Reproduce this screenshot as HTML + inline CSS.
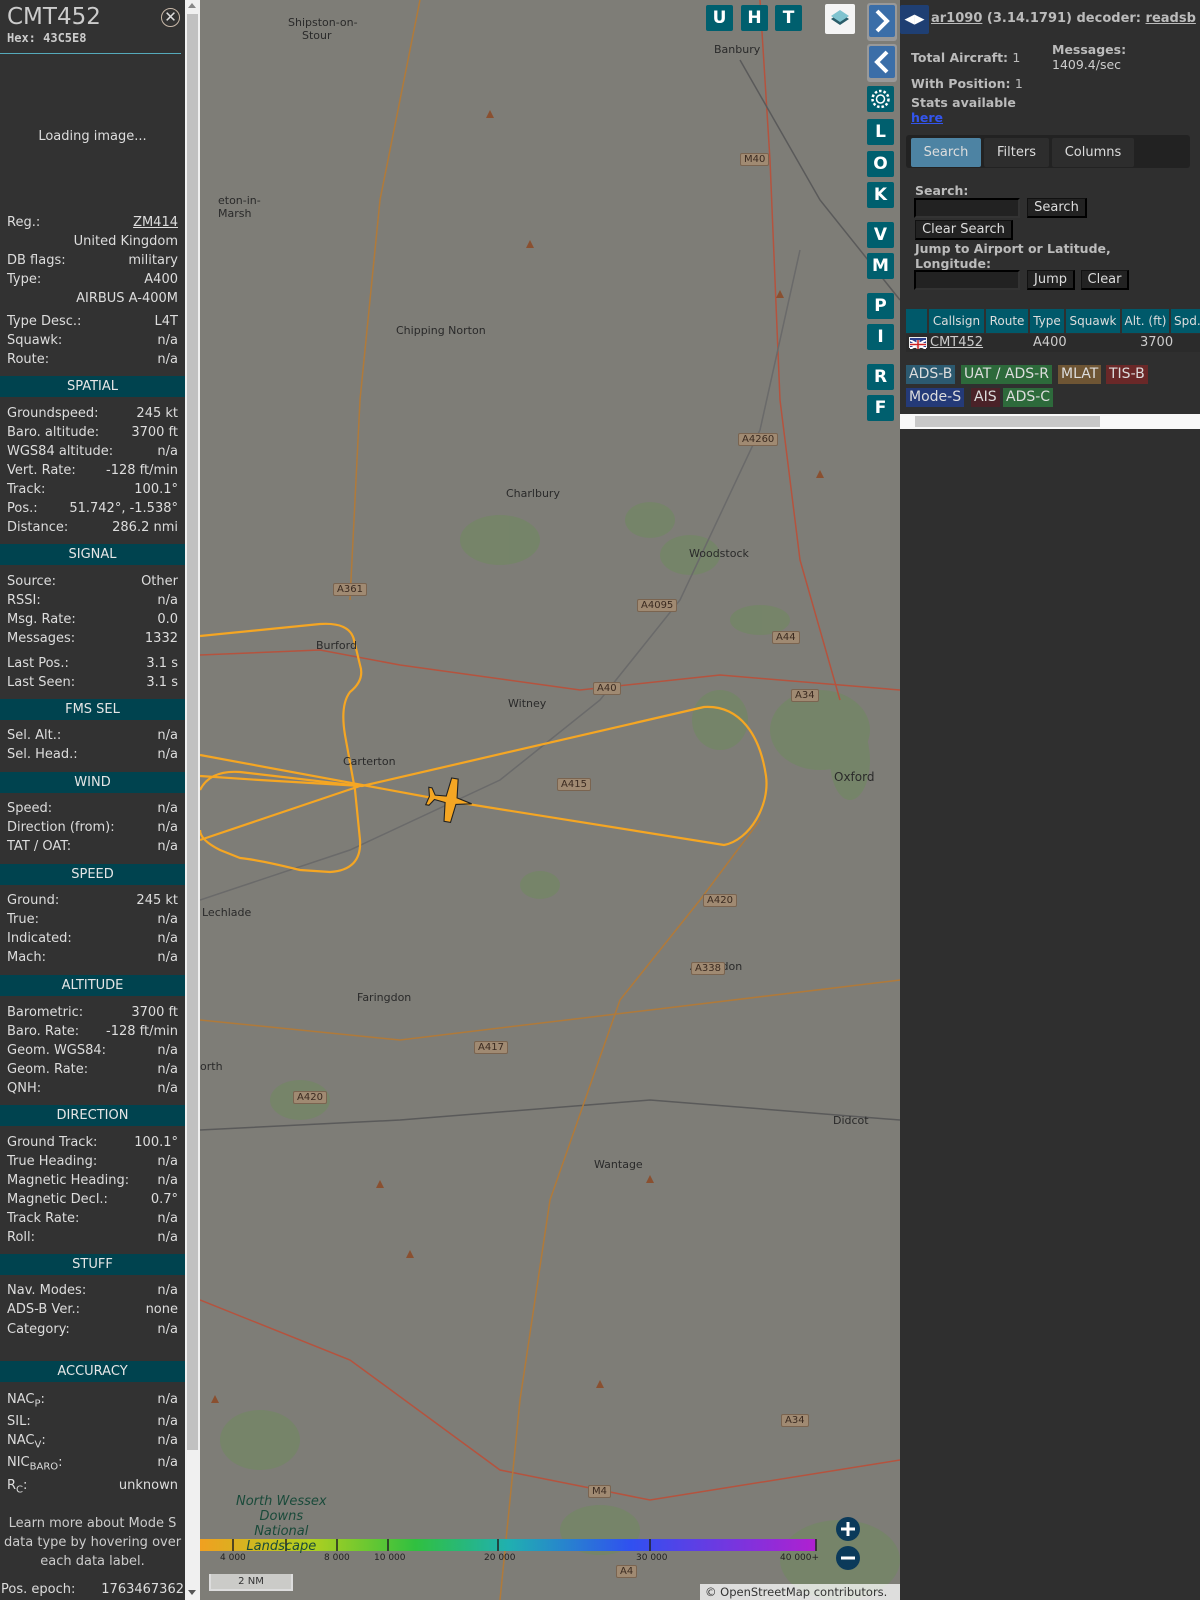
<!DOCTYPE html>
<html><head><meta charset="utf-8">
<style>
*{margin:0;padding:0;box-sizing:border-box}
body{width:1200px;height:1600px;overflow:hidden;background:#7e7d77;font-family:"DejaVu Sans","Liberation Sans",sans-serif;font-size:13px;color:#ddd;position:relative}
#left{position:absolute;left:0;top:0;width:185px;height:1600px;background:#323232}
#lsb{position:absolute;left:185px;top:0;width:15px;height:1600px;background:#f0f0f0}
#lsb .th{position:absolute;left:2px;top:14px;width:11px;height:1436px;background:#c1c1c1}
.r{position:absolute;left:7px;width:171px;height:19px;line-height:19px;font-size:13px;color:#ddd}
.r span{position:absolute;right:0;top:0}
.h{position:absolute;left:0;width:185px;height:21px;line-height:21px;background:#00434f;text-align:center;color:#e6e6e6;font-size:13px}
#map{position:absolute;left:200px;top:0;width:700px;height:1600px;overflow:hidden}
.mb{position:absolute;width:27px;height:26px;background:#005f6e;color:#fff;font-weight:bold;font-size:17px;text-align:center;line-height:26px;border-radius:2px}
#right{position:absolute;left:900px;top:0;width:300px;height:1600px;background:#2f2f2f;color:#ccc}
.b{font-weight:bold;color:#bbb}
.btn{position:absolute;height:20px;line-height:18px;background:#222;border:1px solid #111;border-right:2px solid #000;border-bottom:2px solid #000;color:#ddd;font-size:13px;text-align:center}
.inp{position:absolute;height:20px;background:#222;border:2px solid #000;border-right-color:#333;border-bottom-color:#333}
.th2{position:absolute;top:309px;height:24px;line-height:24px;background:#00596a;color:#ddd;font-size:12px;text-align:center}
.bd{position:absolute;height:19px;line-height:19px;font-size:14px;padding:0 3px;color:#ddd}
.tl{position:absolute;color:#2a2a2a;font-size:11px;white-space:nowrap}
.rd{position:absolute;font-size:10px;color:#3a2a20;background:#a08a72;border:1px solid #7a6450;padding:0 3px;border-radius:2px}
</style></head><body>

<div id="map">
<svg width="700" height="1600" style="position:absolute;left:0;top:0">
<g fill="#6f8a5e" opacity="0.55">
<ellipse cx="300" cy="540" rx="40" ry="25"/><ellipse cx="490" cy="555" rx="30" ry="20"/><ellipse cx="520" cy="720" rx="28" ry="30"/>
<ellipse cx="340" cy="885" rx="20" ry="14"/><ellipse cx="620" cy="730" rx="50" ry="40"/><ellipse cx="450" cy="520" rx="25" ry="18"/>
<ellipse cx="60" cy="1440" rx="40" ry="30"/><ellipse cx="640" cy="1560" rx="60" ry="40"/><ellipse cx="400" cy="1530" rx="40" ry="25"/>
<ellipse cx="650" cy="760" rx="20" ry="40"/><ellipse cx="100" cy="1100" rx="30" ry="20"/><ellipse cx="560" cy="620" rx="30" ry="15"/>
</g>
<g fill="none" stroke-width="1.5">
<path d="M560 0 L570 160 L580 400 L600 560 L640 700" stroke="#b5533e"/>
<path d="M0 655 L120 650 L200 665 L380 690 L520 675 L700 690" stroke="#b5533e"/>
<path d="M0 1130 L200 1120 L450 1100 L700 1120" stroke="#5a5a5a"/>
<path d="M0 1300 L150 1360 L300 1470 L450 1500 L700 1460" stroke="#b5533e"/>
<path d="M150 600 L160 400 L180 200 L220 0" stroke="#b07a3a"/>
<path d="M300 1600 L320 1400 L350 1200 L420 1000 L500 900 L560 820" stroke="#b07a3a"/>
<path d="M0 900 L150 850 L300 780 L400 700 L480 600 L560 430 L600 250" stroke="#6a6a6a"/>
<path d="M0 1020 L200 1040 L450 1010 L700 980" stroke="#b07a3a"/>
<path d="M540 60 L620 200 L700 300" stroke="#5a5a5a"/>
</g>
<g fill="none" stroke="#f5a623" stroke-width="2.2" stroke-linejoin="round">
<path d="M0 755 L249 801 L524 845 C550 840 570 805 566 776 C560 735 540 705 504 707 L162 786 L60 780 L0 776"/>
<path d="M0 636 L120 624 Q150 622 154 640 L160 665 Q165 680 150 692 Q140 705 145 735 L155 790 L160 840 Q162 870 130 872 L100 870 Q60 860 40 858 L20 850 Q0 840 0 830"/>
<path d="M0 790 Q10 770 40 772 L160 786 L0 840"/>
</g>
<g transform="translate(250,800) rotate(10) scale(1.1)">
<path d="M0 -20 L3 -6 L20 -4 L20 2 L3 4 L2 14 L8 18 L8 21 L0 19 L-8 21 L-8 18 L-2 14 L-3 4 L-20 2 L-20 -4 L-3 -6 Z" transform="rotate(90)" fill="#f5a623" stroke="#222" stroke-width="1"/>
</g>
<g fill="#8a5030">
<path d="M290 110 l4 8 h-8z"/><path d="M330 240 l4 8 h-8z"/><path d="M450 1175 l4 8 h-8z"/><path d="M210 1250 l4 8 h-8z"/><path d="M400 1380 l4 8 h-8z"/><path d="M15 1395 l4 8 h-8z"/><path d="M580 290 l4 8 h-8z"/><path d="M620 470 l4 8 h-8z"/><path d="M180 1180 l4 8 h-8z"/>
</g>
<defs><linearGradient id="g" x1="0" x2="1"><stop offset="0" stop-color="#f0a020"/><stop offset="0.18" stop-color="#b0d020"/><stop offset="0.35" stop-color="#30c040"/><stop offset="0.5" stop-color="#20b0b0"/><stop offset="0.7" stop-color="#3050f0"/><stop offset="1" stop-color="#b020d0"/></linearGradient></defs>
<rect x="0" y="1539" width="616" height="12" fill="url(#g)"/>
<g stroke="#222" stroke-width="1.5"><path d="M33 1539v12M86 1539v12M137 1539v12M188 1539v12M298 1539v12M450 1539v12M616 1539v12"/></g>
<circle cx="648" cy="1529" r="12" fill="#0b3a5a"/><path d="M641 1529h14M648 1522v14" stroke="#fff" stroke-width="3"/>
<circle cx="648" cy="1558" r="12" fill="#0b3a5a"/><path d="M641 1558h14" stroke="#fff" stroke-width="3"/>
</svg>
<div class="tl" style="left:88px;top:16px">Shipston-on-<br>&nbsp;&nbsp;&nbsp;&nbsp;Stour</div>
<div class="tl" style="left:514px;top:43px">Banbury</div>
<div class="tl" style="left:18px;top:194px">eton-in-<br>Marsh</div>
<div class="tl" style="left:196px;top:324px">Chipping Norton</div>
<div class="tl" style="left:306px;top:487px">Charlbury</div>
<div class="tl" style="left:489px;top:547px">Woodstock</div>
<div class="tl" style="left:116px;top:639px">Burford</div>
<div class="tl" style="left:308px;top:697px">Witney</div>
<div class="tl" style="left:143px;top:755px">Carterton</div>
<div class="tl" style="left:634px;top:770px;font-size:12px">Oxford</div>
<div class="tl" style="left:2px;top:906px">Lechlade</div>
<div class="tl" style="left:490px;top:960px">Abingdon</div>
<div class="tl" style="left:157px;top:991px">Faringdon</div>
<div class="tl" style="left:394px;top:1158px">Wantage</div>
<div class="tl" style="left:633px;top:1114px">Didcot</div>
<div class="tl" style="left:0;top:1060px">orth</div>
<div class="tl" style="left:36px;top:1494px;color:#1a4a3a;font-style:italic;font-size:13px;text-align:center">North Wessex<br>Downs<br>National<br>Landscape</div>
<div class="rd" style="left:540px;top:153px">M40</div>
<div class="rd" style="left:538px;top:433px">A4260</div>
<div class="rd" style="left:133px;top:583px">A361</div>
<div class="rd" style="left:437px;top:599px">A4095</div>
<div class="rd" style="left:572px;top:631px">A44</div>
<div class="rd" style="left:393px;top:682px">A40</div>
<div class="rd" style="left:591px;top:689px">A34</div>
<div class="rd" style="left:357px;top:778px">A415</div>
<div class="rd" style="left:503px;top:894px">A420</div>
<div class="rd" style="left:491px;top:962px">A338</div>
<div class="rd" style="left:274px;top:1041px">A417</div>
<div class="rd" style="left:93px;top:1091px">A420</div>
<div class="rd" style="left:581px;top:1414px">A34</div>
<div class="rd" style="left:388px;top:1485px">M4</div>
<div class="rd" style="left:416px;top:1565px">A4</div>
<div style="position:absolute;top:1553px;left:0;width:660px;font-size:9px;color:#222">
<span style="position:absolute;left:20px">4 000</span><span style="position:absolute;left:124px">8 000</span><span style="position:absolute;left:174px">10 000</span><span style="position:absolute;left:284px">20 000</span><span style="position:absolute;left:436px">30 000</span><span style="position:absolute;left:580px">40 000+</span></div>
<div style="position:absolute;left:9px;top:1574px;width:84px;height:17px;border:2px solid #ddd;border-top:none;background:rgba(255,255,255,0.6);color:#333;font-size:10px;text-align:center;line-height:15px">2 NM</div>
<div style="position:absolute;left:500px;top:1584px;width:200px;height:16px;background:rgba(255,255,255,0.75);color:#333;font-size:11.5px;line-height:16px;padding-left:5px">© OpenStreetMap contributors.</div>

<div class="mb" style="left:506px;top:5px">U</div>
<div class="mb" style="left:541px;top:5px">H</div>
<div class="mb" style="left:575px;top:5px">T</div>
<div style="position:absolute;left:625px;top:4px;width:30px;height:30px;background:#f4f4f4;border-radius:2px">
<svg width="30" height="30"><path d="M15 9 L24 15 L15 21 L6 15Z" fill="#2a5d6a"/><path d="M15 6 L24 12 L15 18 L6 12Z" fill="#7fc3cf"/></svg></div>
<div style="position:absolute;left:667px;top:3px;width:30px;height:38px;background:#999;border-radius:3px;padding:2px"><div style="background:#3b6ea8;width:26px;height:32px;border-radius:2px"><svg width="26" height="32"><path d="M8 6 L18 16 L8 26" stroke="#fff" stroke-width="4" fill="none"/></svg></div></div>
<div style="position:absolute;left:667px;top:44px;width:30px;height:38px;background:#999;border-radius:3px;padding:2px"><div style="background:#3b6ea8;width:26px;height:32px;border-radius:2px"><svg width="26" height="32"><path d="M18 6 L8 16 L18 26" stroke="#fff" stroke-width="4" fill="none"/></svg></div></div>
<div class="mb" style="left:667px;top:86px"><svg width="27" height="26"><circle cx="13.5" cy="13" r="4" fill="none" stroke="#fff" stroke-width="1.5"/><circle cx="13.5" cy="13" r="8" fill="none" stroke="#fff" stroke-width="2.5" stroke-dasharray="2.5 2"/></svg></div>
<div class="mb" style="left:667px;top:119px">L</div>
<div class="mb" style="left:667px;top:151px">O</div>
<div class="mb" style="left:667px;top:182px">K</div>
<div class="mb" style="left:667px;top:222px">V</div>
<div class="mb" style="left:667px;top:253px">M</div>
<div class="mb" style="left:667px;top:293px">P</div>
<div class="mb" style="left:667px;top:324px">I</div>
<div class="mb" style="left:667px;top:364px">R</div>
<div class="mb" style="left:667px;top:395px">F</div>
</div>

<div id="right">
<div style="position:absolute;left:0;top:5px;width:29px;height:29px;background:#1f3f73;border-radius:2px;color:#fff;font-size:13px;line-height:29px;text-align:center">◀▶</div>
<div class="b" style="position:absolute;left:31px;top:11px;font-size:13px;white-space:nowrap"><u>ar1090</u> (3.14.1791) decoder: <u>readsb</u></div>
<div class="b" style="position:absolute;left:11px;top:50px;font-size:12.5px">Total Aircraft: <span style="font-weight:normal">1</span></div>
<div class="b" style="position:absolute;left:152px;top:42px;font-size:12.5px">Messages:<br><span style="font-weight:normal;color:#ccc">1409.4/sec</span></div>
<div class="b" style="position:absolute;left:11px;top:76px;font-size:12.5px">With Position: <span style="font-weight:normal">1</span></div>
<div class="b" style="position:absolute;left:11px;top:95px;font-size:12.5px">Stats available<br><u style="color:#3355ee">here</u></div>
<div style="position:absolute;left:6px;top:135px;width:284px;height:33px;background:#222;border-radius:3px"></div>
<div style="position:absolute;left:11px;top:138px;width:70px;height:29px;background:#4d83a3;border-radius:2px;color:#ddd;line-height:29px;text-align:center">Search</div>
<div style="position:absolute;left:84px;top:138px;width:65px;height:29px;background:#2d2d2d;border-radius:2px;color:#ddd;line-height:29px;text-align:center">Filters</div>
<div style="position:absolute;left:152px;top:138px;width:82px;height:29px;background:#2d2d2d;border-radius:2px;color:#ddd;line-height:29px;text-align:center">Columns</div>
<div class="b" style="position:absolute;left:15px;top:183px;font-size:12.5px">Search:</div>
<div class="inp" style="left:14px;top:198px;width:106px"></div>
<div class="btn" style="left:127px;top:198px;width:60px">Search</div>
<div class="btn" style="left:15px;top:220px;width:98px">Clear Search</div>
<div class="b" style="position:absolute;left:15px;top:241px;font-size:12.5px;line-height:15px">Jump to Airport or Latitude,<br>Longitude:</div>
<div class="inp" style="left:14px;top:270px;width:106px"></div>
<div class="btn" style="left:127px;top:270px;width:48px">Jump</div>
<div class="btn" style="left:181px;top:270px;width:48px">Clear</div>
<div class="th2" style="left:6px;width:21px"></div>
<div class="th2" style="left:29px;width:55px">Callsign</div>
<div class="th2" style="left:86px;width:42px">Route</div>
<div class="th2" style="left:130px;width:34px">Type</div>
<div class="th2" style="left:166px;width:54px">Squawk</div>
<div class="th2" style="left:222px;width:47px">Alt. (ft)</div>
<div class="th2" style="left:271px;width:29px;text-align:left;padding-left:3px">Spd.</div>
<div style="position:absolute;left:6px;top:334px;width:294px;height:18px;background:#2b2b2b"></div>
<div style="position:absolute;left:9px;top:337px;width:18px;height:11px;background:#2a3e8a;border:1px solid #eee"><svg width="16" height="9"><path d="M0 0L16 9M16 0L0 9" stroke="#fff" stroke-width="2"/><path d="M8 0V9M0 4.5H16" stroke="#fff" stroke-width="3"/><path d="M8 0V9M0 4.5H16" stroke="#c22" stroke-width="1.5"/></svg></div>
<div style="position:absolute;left:30px;top:335px;color:#ccc;text-decoration:underline">CMT452</div>
<div style="position:absolute;left:133px;top:335px;color:#ccc">A400</div>
<div style="position:absolute;left:240px;top:335px;color:#ccc">3700</div>
<div class="bd" style="left:6px;top:365px;background:#2c5a70">ADS-B</div>
<div class="bd" style="left:61px;top:365px;background:#2d6a3b">UAT / ADS-R</div>
<div class="bd" style="left:158px;top:365px;background:#6e5534">MLAT</div>
<div class="bd" style="left:206px;top:365px;background:#6a2828">TIS-B</div>
<div class="bd" style="left:6px;top:388px;background:#243a78">Mode-S</div>
<div class="bd" style="left:71px;top:388px;background:#4a2228">AIS</div>
<div class="bd" style="left:103px;top:388px;background:#2d6a3b">ADS-C</div>
<div style="position:absolute;left:0;top:414px;width:300px;height:15px;background:#f8f8f8"><div style="position:absolute;left:15px;top:2px;width:185px;height:11px;background:#c8c8c8"></div></div>
</div>

<div id="left">
<div style="position:absolute;left:7px;top:4px;font-size:23px;color:#ccc">CMT452</div>
<div style="position:absolute;left:7px;top:31px;font-size:12px;font-weight:bold;color:#ccc;font-family:'DejaVu Sans Mono',monospace">Hex: 43C5E8</div>
<div style="position:absolute;left:161px;top:8px;width:19px;height:19px;border:1.5px solid #c8b8a8;border-radius:50%;color:#ddd;text-align:center;line-height:16px;font-size:15px">✕</div>
<div style="position:absolute;left:0;top:53px;width:181px;height:1px;background:#5ab"></div>
<div style="position:absolute;left:0;top:129px;width:185px;text-align:center;color:#ddd">Loading image...</div>

<div class="r" style="top:213px">Reg.:<span style="text-decoration:underline">ZM414</span></div>
<div class="r" style="top:232px"><span>United Kingdom</span></div>
<div class="r" style="top:251px">DB flags:<span>military</span></div>
<div class="r" style="top:270px">Type:<span>A400</span></div>
<div class="r" style="top:289px"><span>AIRBUS A-400M</span></div>
<div class="r" style="top:312px">Type Desc.:<span>L4T</span></div>
<div class="r" style="top:331px">Squawk:<span>n/a</span></div>
<div class="r" style="top:350px">Route:<span>n/a</span></div>
<div class="h" style="top:376px">SPATIAL</div>
<div class="r" style="top:404px">Groundspeed:<span>245 kt</span></div>
<div class="r" style="top:423px">Baro. altitude:<span>3700 ft</span></div>
<div class="r" style="top:442px">WGS84 altitude:<span>n/a</span></div>
<div class="r" style="top:461px">Vert. Rate:<span>-128 ft/min</span></div>
<div class="r" style="top:480px">Track:<span>100.1°</span></div>
<div class="r" style="top:499px">Pos.:<span>51.742°, -1.538°</span></div>
<div class="r" style="top:518px">Distance:<span>286.2 nmi</span></div>
<div class="h" style="top:544px">SIGNAL</div>
<div class="r" style="top:572px">Source:<span>Other</span></div>
<div class="r" style="top:591px">RSSI:<span>n/a</span></div>
<div class="r" style="top:610px">Msg. Rate:<span>0.0</span></div>
<div class="r" style="top:629px">Messages:<span>1332</span></div>
<div class="r" style="top:654px">Last Pos.:<span>3.1 s</span></div>
<div class="r" style="top:673px">Last Seen:<span>3.1 s</span></div>
<div class="h" style="top:699px">FMS SEL</div>
<div class="r" style="top:726px">Sel. Alt.:<span>n/a</span></div>
<div class="r" style="top:745px">Sel. Head.:<span>n/a</span></div>
<div class="h" style="top:772px">WIND</div>
<div class="r" style="top:799px">Speed:<span>n/a</span></div>
<div class="r" style="top:818px">Direction (from):<span>n/a</span></div>
<div class="r" style="top:837px">TAT / OAT:<span>n/a</span></div>
<div class="h" style="top:864px">SPEED</div>
<div class="r" style="top:891px">Ground:<span>245 kt</span></div>
<div class="r" style="top:910px">True:<span>n/a</span></div>
<div class="r" style="top:929px">Indicated:<span>n/a</span></div>
<div class="r" style="top:948px">Mach:<span>n/a</span></div>
<div class="h" style="top:975px">ALTITUDE</div>
<div class="r" style="top:1003px">Barometric:<span>3700 ft</span></div>
<div class="r" style="top:1022px">Baro. Rate:<span>-128 ft/min</span></div>
<div class="r" style="top:1041px">Geom. WGS84:<span>n/a</span></div>
<div class="r" style="top:1060px">Geom. Rate:<span>n/a</span></div>
<div class="r" style="top:1079px">QNH:<span>n/a</span></div>
<div class="h" style="top:1105px">DIRECTION</div>
<div class="r" style="top:1133px">Ground Track:<span>100.1°</span></div>
<div class="r" style="top:1152px">True Heading:<span>n/a</span></div>
<div class="r" style="top:1171px">Magnetic Heading:<span>n/a</span></div>
<div class="r" style="top:1190px">Magnetic Decl.:<span>0.7°</span></div>
<div class="r" style="top:1209px">Track Rate:<span>n/a</span></div>
<div class="r" style="top:1228px">Roll:<span>n/a</span></div>
<div class="h" style="top:1254px">STUFF</div>
<div class="r" style="top:1281px">Nav. Modes:<span>n/a</span></div>
<div class="r" style="top:1300px">ADS-B Ver.:<span>none</span></div>
<div class="r" style="top:1320px">Category:<span>n/a</span></div>
<div class="h" style="top:1361px">ACCURACY</div>
<div class="r" style="top:1390px">NAC<sub style="font-size:10px">P</sub>:<span>n/a</span></div>
<div class="r" style="top:1412px">SIL:<span>n/a</span></div>
<div class="r" style="top:1431px">NAC<sub style="font-size:10px">V</sub>:<span>n/a</span></div>
<div class="r" style="top:1453px">NIC<sub style="font-size:10px">BARO</sub>:<span>n/a</span></div>
<div class="r" style="top:1476px">R<sub style="font-size:10px">C</sub>:<span>unknown</span></div>
<div style="position:absolute;left:0;top:1514px;width:185px;text-align:center;line-height:19px;color:#ccc">Learn more about Mode S data type by hovering over each data label.</div>
<div class="r" style="top:1580px;left:1px;width:183px">Pos. epoch:<span>1763467362</span></div>
</div>
<div id="lsb"><div class="th"></div><div style="position:absolute;left:3px;top:3px;border:4px solid transparent;border-bottom:5px solid #888;border-top:none"></div><div style="position:absolute;left:3px;top:1590px;border:4px solid transparent;border-top:5px solid #555;border-bottom:none"></div></div>
</body></html>
